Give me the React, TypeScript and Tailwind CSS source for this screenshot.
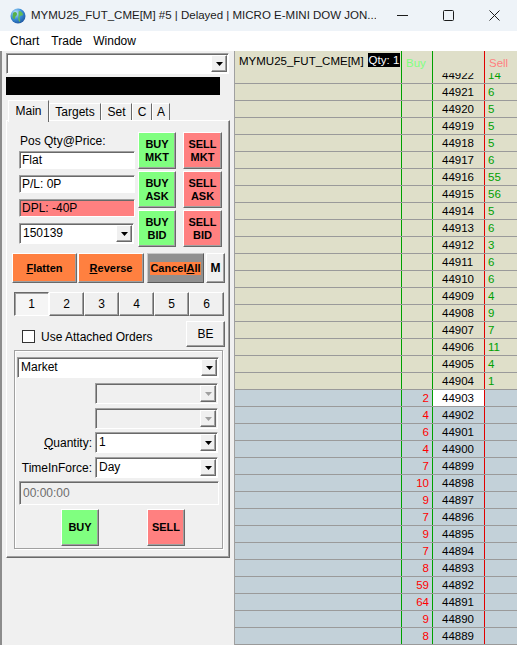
const raised =
  'border border-t-white border-l-white border-r-[#696969] border-b-[#696969] shadow-[inset_-1px_-1px_0_#a0a0a0]';
const sunken =
  'border border-t-[#a0a0a0] border-l-[#a0a0a0] border-r-white border-b-white shadow-[inset_1px_1px_0_#696969]';

const ask: [number, number][] = [
  [44922, 14], [44921, 6], [44920, 5], [44919, 5], [44918, 5], [44917, 6], [44916, 55],
  [44915, 56], [44914, 5], [44913, 6], [44912, 3], [44911, 6], [44910, 6], [44909, 4],
  [44908, 9], [44907, 7], [44906, 11], [44905, 4], [44904, 1],
];
const bid: [number, number][] = [
  [44903, 2], [44902, 4], [44901, 6], [44900, 4], [44899, 7], [44898, 10], [44897, 9],
  [44896, 7], [44895, 9], [44894, 7], [44893, 8], [44892, 59], [44891, 64], [44890, 9],
  [44889, 8],
];

const Arrow = ({ disabled }: { disabled?: boolean }) => (
  <svg width="7" height="4" viewBox="0 0 7 4">
    <polygon points="0,0 7,0 3.5,4" fill={disabled ? '#a0a0a0' : '#000'} />
  </svg>
);

const Combo = ({ value, className, disabled }: { value: string; className: string; disabled?: boolean }) => (
  <div className={`flex h-[21px] shrink-0 ${sunken} ${disabled ? 'bg-[#f0f0f0]' : 'bg-white'} ${className}`}>
    <div className="flex-1 truncate pl-[3px] leading-[19px]">{value}</div>
    <div className={`flex h-[17px] w-[16px] items-center justify-center self-center mr-[1px] bg-[#f0f0f0] ${raised}`}>
      <Arrow disabled={disabled} />
    </div>
  </div>
);

const Field = ({ children, red, className }: { children: string; red?: boolean; className: string }) => (
  <div className={`h-[18px] w-[116px] pl-[2px] leading-[16px] ${sunken} ${red ? 'bg-[#ff8080]' : 'bg-white'} ${className}`}>
    {children}
  </div>
);

const TradeBtn = ({ top, bottom, green }: { top: string; bottom: string; green?: boolean }) => (
  <div
    className={`flex h-[37px] flex-col items-center justify-center text-[11px] font-bold leading-[13px] ${raised} ${
      green ? 'bg-[#80ff80]' : 'bg-[#ff8080]'
    }`}
  >
    <span>{top}</span>
    <span>{bottom}</span>
  </div>
);

const Globe = () => (
  <svg width="16" height="16" viewBox="0 0 16 16">
    <defs>
      <radialGradient id="globe" cx="0.35" cy="0.3" r="0.8">
        <stop offset="0" stopColor="#c6ebff" />
        <stop offset="0.5" stopColor="#3a8fd8" />
        <stop offset="1" stopColor="#1b4f9a" />
      </radialGradient>
    </defs>
    <circle cx="8" cy="8" r="7.5" fill="url(#globe)" />
    <path d="M3 5 C5 3 7 4 7 6 C7 8 5 8 5 10 C5 12 3 11 2.5 9 Z" fill="#56b04a" />
    <path d="M9 3 C11 3 13 5 13 7 C12 8 10 7 9.5 9 C9 11 11 12 10 14 C8 13 8 10 8.5 8 C9 6 8 4 9 3Z" fill="#62bc55" />
  </svg>
);

const TitleBar = () => (
  <div className="flex h-[31px] shrink-0 items-center bg-[#eef3f8]">
    <div className="ml-[10px] flex">
      <Globe />
    </div>
    <div className="ml-[5px] w-[345px] overflow-hidden whitespace-nowrap text-[11.5px] text-[#1b1b1b]">
      MYMU25_FUT_CME[M] #5 | Delayed | MICRO E-MINI DOW JON...
    </div>
    <div className="ml-auto flex h-full">
      <div className="flex w-[46px] items-center justify-center">
        <svg width="11" height="1">
          <rect width="11" height="1" fill="#1b1b1b" />
        </svg>
      </div>
      <div className="flex w-[46px] items-center justify-center">
        <svg width="11" height="11">
          <rect x="0.5" y="0.5" width="10" height="10" rx="1" fill="none" stroke="#1b1b1b" />
        </svg>
      </div>
      <div className="flex w-[46px] items-center justify-center">
        <svg width="11" height="11">
          <path d="M0.5 0.5 L10.5 10.5 M10.5 0.5 L0.5 10.5" stroke="#1b1b1b" />
        </svg>
      </div>
    </div>
  </div>
);

const MenuBar = () => (
  <div className="flex h-[20px] shrink-0 items-center gap-[11px] bg-white pl-[10px] text-[12px]">
    <span>Chart</span>
    <span className="ml-[1px]">Trade</span>
    <span>Window</span>
  </div>
);

const LeftPanel = () => (
  <div className="flex w-[234px] shrink-0 flex-col border-l-2 border-l-[#8c8c8c] pl-[4px] pt-[2px]">
    <Combo value="" className="w-[223px]" />
    <div className="mt-[3px] h-[18px] w-[214px] bg-black" />
    <div className="mt-[5px] flex h-[20px] items-end pl-[2px]">
      <div className="relative z-10 -mb-[2px] flex h-[22px] w-[41px] items-center justify-center border-l border-t border-r border-l-white border-t-white border-r-[#696969] bg-[#f0f0f0] pb-[2px]">
        Main
      </div>
      <div className="flex h-[17px] w-[52px] items-center justify-center border-l border-t border-r border-l-white border-t-white border-r-[#696969]">
        Targets
      </div>
      <div className="flex h-[17px] w-[31px] items-center justify-center border-l border-t border-r border-l-white border-t-white border-r-[#696969]">
        Set
      </div>
      <div className="flex h-[17px] w-[20px] items-center justify-center border-l border-t border-r border-l-white border-t-white border-r-[#696969]">
        C
      </div>
      <div className="flex h-[17px] w-[18px] items-center justify-center border-l border-t border-r border-l-white border-t-white border-r-[#696969]">
        A
      </div>
    </div>
    <div className={`h-[438px] w-[224px] bg-[#f0f0f0] ${raised}`}>
      <div className="flex pl-[12px] pt-[11px]">
        <div className="flex w-[116px] flex-col">
          <div className="mt-[1px] h-[16px] pl-[1px] leading-[16px]">Pos Qty@Price:</div>
          <Field className="mt-[2px]">Flat</Field>
          <Field className="mt-[6px]">P/L: 0P</Field>
          <Field className="mt-[6px]" red>
            DPL: -40P
          </Field>
          <Combo value="150139" className="mt-[6px] w-[115px]" />
        </div>
        <div className="ml-[3px] flex w-[38px] flex-col gap-[2px]">
          <TradeBtn top="BUY" bottom="MKT" green />
          <TradeBtn top="BUY" bottom="ASK" green />
          <TradeBtn top="BUY" bottom="BID" green />
        </div>
        <div className="ml-[7px] flex w-[39px] flex-col gap-[2px]">
          <TradeBtn top="SELL" bottom="MKT" />
          <TradeBtn top="SELL" bottom="ASK" />
          <TradeBtn top="SELL" bottom="BID" />
        </div>
      </div>

      <div className="mt-[6px] flex h-[30px] pl-[5px] text-[11px] font-bold">
        <div className={`flex w-[65px] items-center justify-center bg-[#ff8040] ${raised}`}>
          <span>
            <span className="underline">F</span>latten
          </span>
        </div>
        <div className={`ml-[1px] flex w-[66px] items-center justify-center bg-[#ff8040] ${raised}`}>
          <span>
            <span className="underline">R</span>everse
          </span>
        </div>
        <div className="ml-[3px] flex w-[57px] items-center justify-center border border-t-[#c8c8c8] border-l-[#c8c8c8] border-r-[#5a5a5a] border-b-[#5a5a5a] bg-[#909090]">
          <span className="bg-[#ff8040] leading-[13px]">
            Cancel<span className="underline">A</span>ll
          </span>
        </div>
        <div className={`ml-[2px] flex w-[19px] items-center justify-center bg-[#f0f0f0] text-[12px] ${raised}`}>
          M
        </div>
      </div>

      <div className="mt-[9px] flex h-[24px] pl-[7px]">
        <div className="flex w-[35px] items-center justify-center border border-t-[#696969] border-l-[#696969] border-r-white border-b-white bg-[#f5f5f5] shadow-[inset_1px_1px_0_#a0a0a0]">
          1
        </div>
        {['2', '3', '4', '5', '6'].map((n) => (
          <div key={n} className={`flex w-[35px] items-center justify-center ${raised}`}>
            {n}
          </div>
        ))}
      </div>

      <div className="mt-[5px] flex pl-[15px] pr-[4px]">
        <div className="mt-[9px] flex h-[13px] items-center">
          <div className="h-[13px] w-[13px] border border-[#333333] bg-white" />
          <span className="ml-[6px]">Use Attached Orders</span>
        </div>
        <div className={`ml-auto flex h-[26px] w-[39px] items-center justify-center ${raised}`}>BE</div>
      </div>

      <div className="ml-[7px] mt-[3px] flex h-[199px] w-[209px] flex-col border border-[#a0a0a0] shadow-[inset_1px_1px_0_#fff,1px_1px_0_#fff]">
        <Combo value="Market" className="ml-[2px] mt-[6px] w-[202px]" />
        <Combo value="" disabled className="ml-[80px] mt-[5px] w-[123px]" />
        <Combo value="" disabled className="ml-[80px] mt-[4px] w-[123px]" />
        <div className="mt-[3px] flex items-center">
          <div className="w-[80px] pr-[3px] text-right">
            <span className="underline">Q</span>uantity:
          </div>
          <Combo value="1" className="w-[123px]" />
        </div>
        <div className="mt-[4px] flex items-center">
          <div className="w-[80px] pr-[3px] text-right">TimeInForce:</div>
          <Combo value="Day" className="w-[123px]" />
        </div>
        <div className={`ml-[4px] mt-[3px] h-[24px] w-[200px] pl-[3px] leading-[22px] text-[#6d6d6d] ${sunken}`}>
          00:00:00
        </div>
        <div className="mt-[4px] flex">
          <div className={`ml-[46px] flex h-[37px] w-[38px] items-center justify-center bg-[#80ff80] text-[11px] font-bold ${raised}`}>
            BUY
          </div>
          <div className={`ml-[48px] flex h-[37px] w-[38px] items-center justify-center bg-[#ff8080] text-[11px] font-bold ${raised}`}>
            SELL
          </div>
        </div>
      </div>
    </div>
  </div>
);

const Row = ({ price, buy, sell, isBid }: { price: number; buy?: number; sell?: number; isBid?: boolean }) => (
  <div className={`flex h-[17px] border-b border-b-[#9a9a9a] ${isBid ? 'bg-[#c3d1d9]' : 'bg-[#dfdfc9]'}`}>
    <div className="w-[166px]" />
    <div className="w-[31px] border-l border-l-[#00a000] pr-[3px] text-right text-[#ff0000]">{buy}</div>
    <div className={`w-[52px] border-l border-l-[#00a000] pl-[9px] ${price === 44903 ? 'bg-white' : ''}`}>{price}</div>
    <div className="flex-1 border-l border-l-[#e00000] pl-[3px] text-[#00a000]">{sell}</div>
  </div>
);

const Ladder = () => (
  <div className="flex min-w-0 flex-1 flex-col border-l border-l-[#a0a0a0] text-[11.5px] leading-[16px]">
    <div className="flex h-[22px] shrink-0 bg-[#dfdfc9]">
      <div className="flex w-[166px] items-start whitespace-nowrap pl-[4px] pt-[2px]">
        <span>MYMU25_FUT_CME[M]</span>
        <span className="ml-[4px] bg-black px-[1px] leading-[14px] text-white">Qty: 1</span>
      </div>
      <div className="w-[31px] border-l border-l-[#00a000] pl-[4px] pt-[4px] text-[#80ff80]">Buy</div>
      <div className="w-[52px] border-l border-l-[#00a000]" />
      <div className="flex-1 border-l border-l-[#e00000] pl-[4px] pt-[4px] text-[#ff8080]">Sell</div>
    </div>
    <div className="min-h-0 flex-1 overflow-hidden">
      <div className="-mt-[6px]">
        {ask.map(([p, v]) => (
          <Row key={p} price={p} sell={v} />
        ))}
        {bid.map(([p, v]) => (
          <Row key={p} price={p} buy={v} isBid />
        ))}
      </div>
    </div>
  </div>
);

export default function App() {
  return (
    <div className="flex h-[645px] w-[517px] flex-col overflow-hidden bg-[#f0f0f0] font-['Liberation_Sans',Arial,sans-serif] text-[12px] text-black">
      <TitleBar />
      <MenuBar />
      <div className="flex min-h-0 flex-1">
        <LeftPanel />
        <Ladder />
      </div>
    </div>
  );
}
